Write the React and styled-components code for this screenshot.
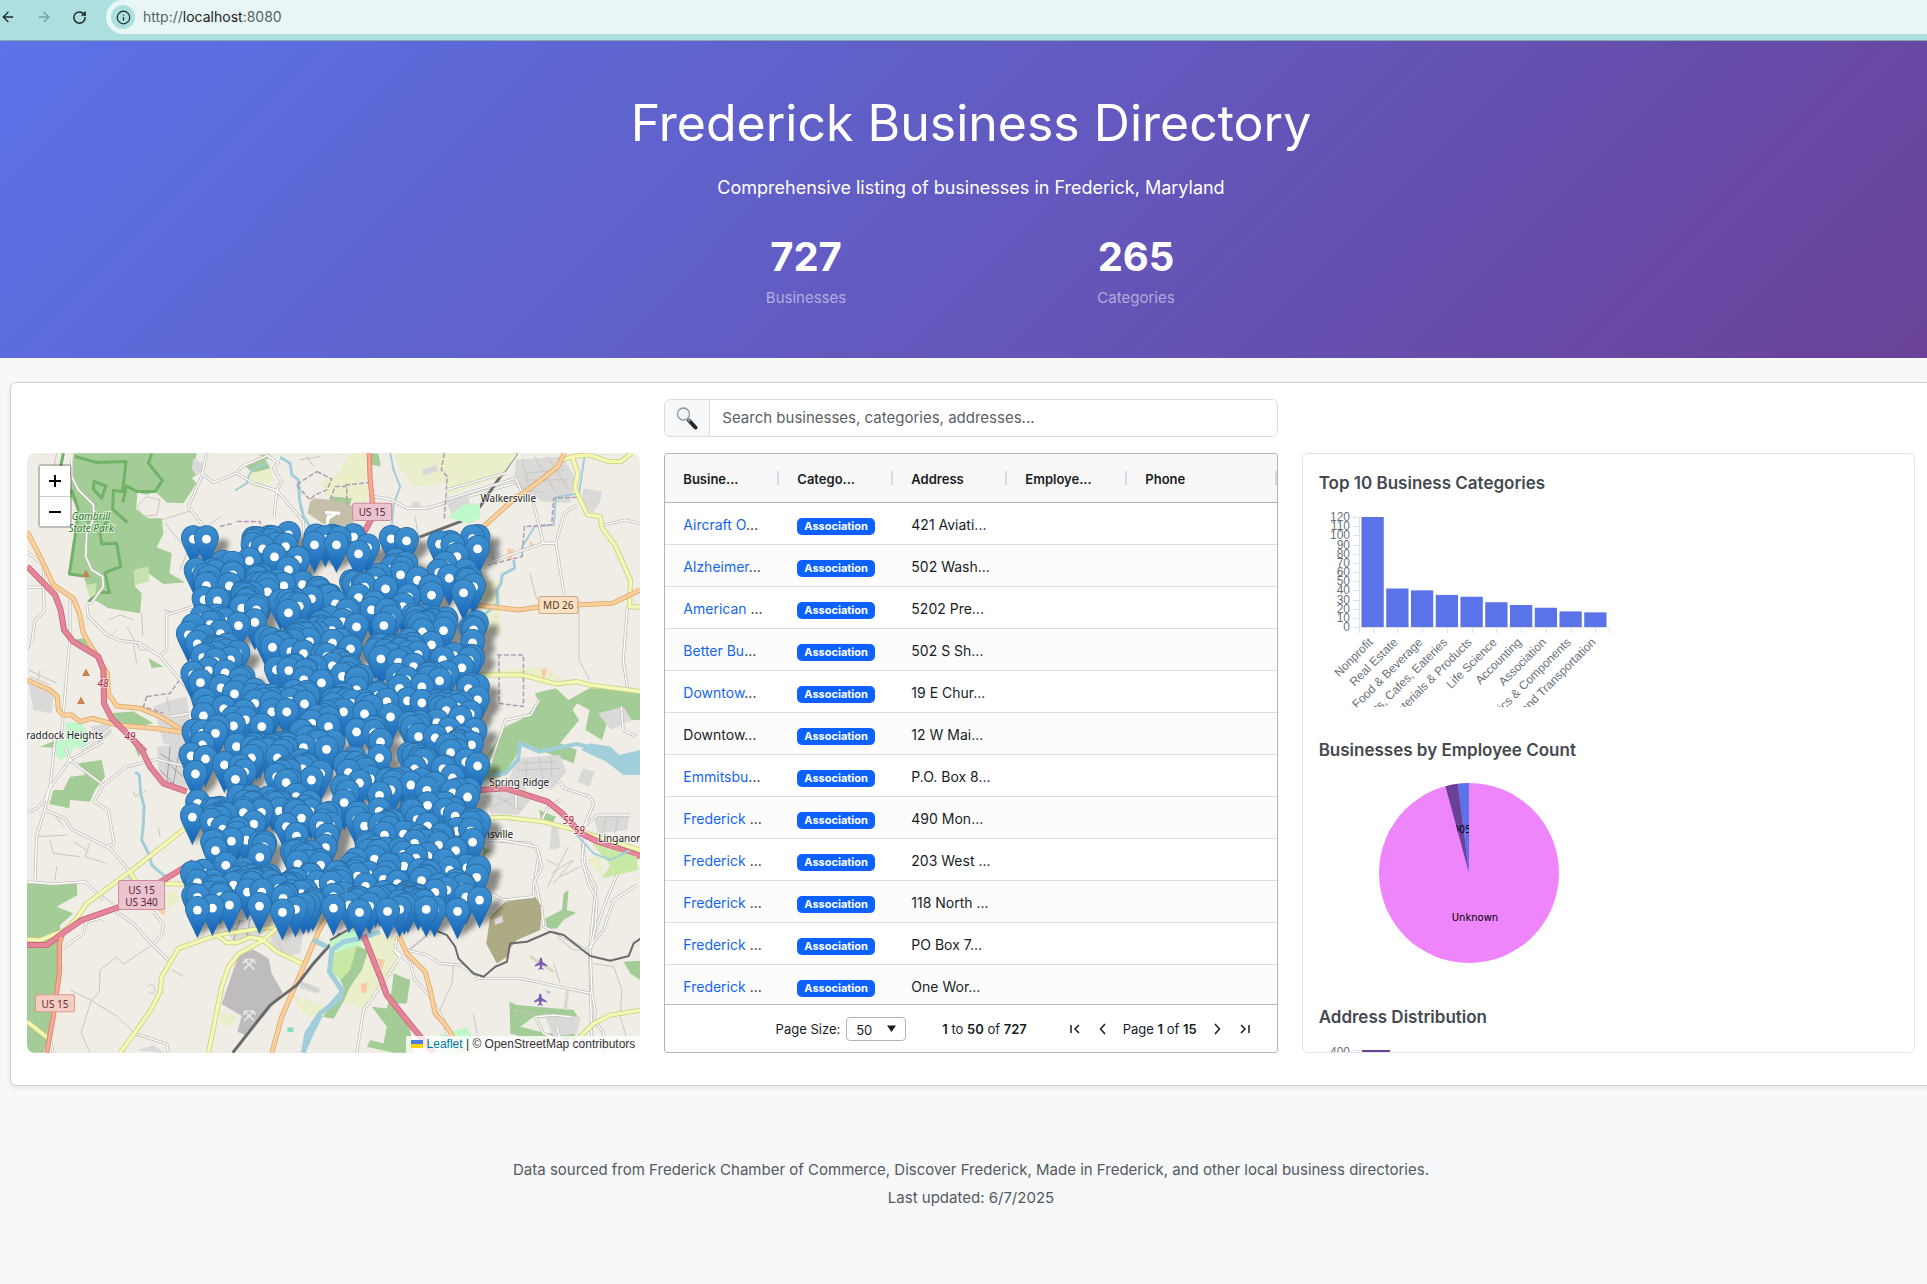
import React from "react";
import styled, { createGlobalStyle } from "styled-components";
import { ArrowLeft, ArrowRight, RotateCw, Info } from "lucide-react";

const sans = `Inter, "Liberation Sans", sans-serif`;

const GlobalStyle = createGlobalStyle`
  *, *::before, *::after { box-sizing: border-box; }
  body {
    margin: 0;
    background: #f7f8fa;
    color: #212529;
    font-family: ${sans};
    font-size: 15px;
    line-height: 24px;
    overflow: hidden;
  }
  h1, h2, p, dl, dd, dt { margin: 0; }
  button, input, select { font: inherit; color: inherit; }
`;

/* ---------- browser bar ---------- */

const BrowserBar = styled.nav`
  display: flex;
  height: 41px;
  background: #addfdf;
  border-bottom: 1px solid #86a9ac;
`;

const NavButtons = styled.div`
  display: flex;
  align-items: center;
  gap: 20px;
  width: 106px;
  height: 34px;
`;

const NavButton = styled.button`
  display: flex;
  padding: 0;
  border: 0;
  background: none;
  color: ${(p) => (p.disabled ? "#7a9ea1" : "#1f2a2b")};
`;

const AddressBar = styled.div`
  display: flex;
  align-items: center;
  flex: 1;
  gap: 8px;
  height: 34px;
  padding-left: 5px;
  border-radius: 17px 0 0 17px;
  background: #e8f6f5;
  font-size: 14px;
`;

const SiteInfo = styled.span`
  display: grid;
  place-items: center;
  width: 24px;
  height: 24px;
  border-radius: 50%;
  background: #addfdf;
  color: #1f2a2b;
`;

const Url = styled.a`
  color: #566364;
  text-decoration: none;
  b { font-weight: 400; color: #1b2223; }
`;

/* ---------- header ---------- */

const Page = styled.div`
  margin-right: -15px;
`;

const Hero = styled.header`
  display: flex;
  flex-direction: column;
  align-items: center;
  padding: 48px 16px;
  background: linear-gradient(135deg, #5b73e8 0%, #6a4198 100%);
  color: #fff;
`;

const Title = styled.h1`
  font-size: 50px;
  font-weight: 400;
  line-height: 68px;
`;

const Lead = styled.p`
  margin-top: 16px;
  font-size: 18px;
  line-height: 30px;
`;

const Stats = styled.dl`
  display: grid;
  grid-template-columns: 330px 330px;
  margin-top: 30px;
`;

const Stat = styled.div`
  display: flex;
  flex-direction: column-reverse;
  align-items: center;
  gap: 5px;
  dt { color: rgba(255, 255, 255, 0.5); }
  dd { font-size: 40px; font-weight: 700; line-height: 48px; }
`;

/* ---------- dashboard ---------- */

const Card = styled.main`
  display: grid;
  grid-template-columns: repeat(3, minmax(0, 1fr));
  gap: 16px 24px;
  margin: 24px 10px 0;
  padding: 16px 16px 32px;
  border: 1px solid #d0d2d5;
  border-radius: 6px;
  background: #fff;
  box-shadow: 0 2px 4px rgba(0, 0, 0, 0.08);
`;

const SearchBox = styled.label`
  grid-column: 2;
  display: flex;
  height: 38px;
  border: 1px solid #d8dde3;
  border-radius: 6px;
  overflow: hidden;
`;

const SearchIcon = styled.span`
  display: grid;
  place-items: center;
  width: 45px;
  border-right: 1px solid #d8dde3;
  background: #f7f8fa;
`;

const SearchInput = styled.input`
  flex: 1;
  min-width: 0;
  padding: 0 12px;
  border: 0;
  outline: 0;
  background: #fff;
  &::placeholder { color: #595f65; opacity: 1; }
`;

const MapPanel = styled.section`
  position: relative;
  grid-column: 1;
  height: 600px;
  border-radius: 8px;
  overflow: hidden;
  background: #f0ede6;
  > svg { display: block; width: 100%; height: 100%; }
`;

const ZoomControl = styled.div`
  position: absolute;
  top: 11px;
  left: 11px;
  border: 2px solid rgba(0, 0, 0, 0.2);
  border-radius: 4px;
  background-clip: padding-box;
`;

const ZoomButton = styled.button`
  display: grid;
  place-items: center;
  width: 30px;
  height: 30px;
  padding: 0;
  border: 0;
  background: #fff;
  color: #000;
  & + & { border-top: 1px solid #ccc; }
`;

const Attribution = styled.div`
  position: absolute;
  right: 0;
  bottom: 0;
  padding: 0 5px;
  background: rgba(255, 255, 255, 0.8);
  color: #333;
  font: 12px/17px "Liberation Sans", sans-serif;
  a { color: #0078a8; text-decoration: none; }
`;

const Flag = styled.span`
  display: inline-block;
  width: 12px;
  height: 8px;
  margin-right: 4px;
  background: linear-gradient(#4c7be1 50%, #ffd500 50%);
`;

const GridPanel = styled.section`
  display: flex;
  flex-direction: column;
  height: 600px;
  border: 1px solid #afb5bf;
  border-radius: 3px;
  overflow: hidden;
`;

const GridBody = styled.div`
  flex: 1;
  min-height: 0;
  overflow: hidden;
`;

const Table = styled.table`
  width: 100%;
  table-layout: fixed;
  border-collapse: separate;
  border-spacing: 0;
  color: #181d1f;
  font-size: 14px;
  white-space: nowrap;
  text-align: left;
`;

const Col = styled.col`
  width: ${(p) => p.$width};
`;

const HeadCell = styled.th`
  height: 49px;
  padding: 2px 0 0 18px;
  border-bottom: 1px solid #afb5bf;
  background: linear-gradient(#d5dbe6, #d5dbe6) right center / 2px 14px no-repeat #f7f7f7;
  font-weight: 600;
  font-size: 13px;
`;

const Row = styled.tr`
  &:nth-child(even) { background: #fcfcfc; }
`;

const Cell = styled.td`
  height: 42px;
  padding: 2px 0 0 18px;
  border-bottom: 1px solid #d8dee8;
  line-height: 20px;
`;

const BusinessLink = styled.a`
  color: #1466f0;
  text-decoration: none;
`;

const Badge = styled.span`
  display: inline-block;
  padding: 0 7px;
  border-radius: 5px;
  background: #0d62ff;
  color: #fff;
  font-size: 11px;
  font-weight: 700;
  line-height: 17px;
  vertical-align: -1px;
`;

const Pager = styled.footer`
  display: flex;
  align-items: center;
  justify-content: flex-end;
  height: 48px;
  padding-right: 24px;
  border-top: 1px solid #afb5bf;
  color: #181d1f;
  font-size: 13px;
  b { font-weight: 600; }
`;

const PageSize = styled.label`
  display: flex;
  align-items: center;
  gap: 6px;
`;

const SelectWrap = styled.span`
  position: relative;
  display: flex;
  svg { position: absolute; right: 10px; top: 8px; pointer-events: none; }
`;

const SizeSelect = styled.select`
  width: 60px;
  height: 24px;
  padding: 0 9px;
  border: 1px solid #afb5bf;
  border-radius: 4px;
  background: #fff;
  appearance: none;
`;

const RangeText = styled.span`
  margin: 0 40px 0 36px;
`;

const PageNav = styled.div`
  display: flex;
  align-items: center;
  gap: 12px;
`;

const PageButton = styled.button`
  display: flex;
  padding: 0;
  border: 0;
  background: none;
`;

const ChartsPanel = styled.aside`
  height: 600px;
  padding: 16px;
  border: 1px solid #dfe2e6;
  border-radius: 6px;
  overflow: hidden;
`;

const ChartSection = styled.section`
  margin-bottom: 30px;
  svg { display: block; overflow: hidden; }
`;

const ChartTitle = styled.h2`
  margin-bottom: 10px;
  color: #444a50;
  font-size: 17px;
  font-weight: 600;
  line-height: 27px;
`;

const PageFooter = styled.footer`
  display: flex;
  flex-direction: column;
  align-items: center;
  gap: 4px;
  padding: 72px 16px;
  color: #54585c;
`;

/* ---------- map ---------- */

const ROADS = {
  motorway: ["#c9647c", "#e48598", 6],
  trunk: ["#d98068", "#f7a992", 5],
  primary: ["#dba867", "#fcd09c", 5],
  secondary: ["#c9cf83", "#f5f8b4", 5],
  minor: ["#c4c0ba", "#ffffff", 3],
};

function Road({ kind, d }) {
  const [edge, fill, width] = ROADS[kind];
  const common = { d, fill: "none", strokeLinejoin: "round", vectorEffect: "non-scaling-stroke" };
  return (
    <>
      <path {...common} stroke={edge} strokeWidth={width} />
      <path {...common} stroke={fill} strokeWidth={width - 1.6} />
    </>
  );
}

function Line({ d, color, width = 1, dash }) {
  return (
    <path
      d={d}
      fill="none"
      stroke={color}
      strokeWidth={width}
      strokeDasharray={dash}
      strokeLinejoin="round"
      vectorEffect="non-scaling-stroke"
    />
  );
}

const FOREST = "#a4cc97";
const FARM = "#ebeecb";
const TOWN = "#dad9d8";
const WATER = "#a1cedb";
const LANE = "#c9c6c3";
const BORDER = "#b39bb5";

function NorthWest() {
  return (
    <g transform="translate(-7 -3) scale(.3333)">
      <path fill={FOREST} d="M160 10H530L522 45 548 62 515 85 530 100 490 160 440 158 405 125 380 135 352 128 348 178 385 205 425 205 430 250 410 292 455 310 448 370 495 398 430 402 385 370 345 360 345 410 365 430 360 490 300 480 265 475 215 445 190 378 150 375 165 240 180 180 150 140Z" />
      <path fill="#c8e3ae" d="M198 405L230 400 225 440 210 445ZM340 360L385 350 388 395 345 405Z" />
      <path fill={FOREST} d="M670 45L730 18 750 55 700 70ZM150 570L195 565 235 605 215 600ZM270 790L340 785 400 820 350 830 290 820ZM110 870L60 890 120 895ZM385 625L430 650 395 655Z" />
      <path fill={FARM} d="M985 10H1045L1055 80 1000 100 945 90ZM1120 10H1280L1275 100 1180 110 1140 60ZM680 70L750 60 760 90 720 120 680 100ZM900 100L950 70 1050 100 1040 160 930 150Z" />
      <path fill={FOREST} d="M1050 10L1075 12 1082 50 1055 45ZM935 140L995 145 990 165 930 160ZM715 15L750 15 740 30Z" />
      <path fill={TOWN} d="M520 25L548 40 545 65 525 75 515 55ZM25 700L60 705 100 740 95 790 40 780ZM1175 155L1200 155 1200 180 1175 178ZM1205 60L1250 45 1252 65 1210 78ZM210 830L270 820 275 850 235 880ZM400 770L450 750 500 740 520 900 430 880Z" />
      <path fill="#bff8cb" d="M135 820L180 815 205 850 200 890 140 895Z" />
      <path fill="#c3bfa8" d="M885 145L965 155 1000 170 1000 225 930 235 862 190 870 155Z" />
      <Line color="#70b266" width={3} d="M130 10L120 60 155 75M165 20L230 38 318 35 308 125 280 122 278 178 322 218M395 12L385 40 427 92 405 125 350 125 320 108 308 158M222 95L258 108 245 145 220 118ZM155 120L175 180 165 260 148 372 190 378M205 455L240 428 268 428 255 368 302 350 290 280 245 282 240 250 265 205 200 215" />
      <Line color={WATER} width={3} d="M780 22L810 40 815 75 835 90 838 150 850 200 870 230 900 240" />
      <Line color={WATER} width={2} d="M740 40L700 55 685 80 680 100 645 122M1110 10L1120 60 1140 110 1120 165 1115 230" />
      <Line color={BORDER} width={1.5} dash="5 2" d="M890 65L935 88 920 120 885 135 870 150 828 105 890 65M975 105L1050 98 1050 160M930 150L945 110 980 110 980 165M650 215L720 215 725 245 800 240M600 230L640 220M380 740L450 730 485 680 500 640M380 740L370 770 430 790" />
      <Line color={LANE} d="M425 210L520 180M435 220L500 300M480 360L500 310M860 20L880 50M840 30L900 20M265 510L300 495 340 510M320 530L360 600 400 600M340 580L350 640M430 480L470 490 500 470M40 560L25 600M25 660L110 700M30 680L90 705M60 660L55 690M440 740L450 790M550 240L600 200" />
      <Line color={LANE} d="M350 170L380 140 420 150 410 195 370 200ZM270 560L290 540M365 490L368 560M110 10L100 60 120 90" />
      <Road kind="minor" d="M560 10L545 80 505 170 555 235M545 70L580 98 650 70 665 50 700 35 740 18M650 70L700 100 770 122 850 215 852 260M740 15L775 40 760 55 785 95 770 122 762 200" />
      <Road kind="minor" d="M155 30V80L175 120 220 165 222 205 200 250 197 320 215 360 248 380 250 410 212 462M212 462L200 458M20 305L70 345 72 485 45 510 35 580M22 412H75M150 440V560L130 790 120 900M200 465L205 500 260 555 300 572 355 578 420 618 505 720M440 600L440 495 520 470M420 618L440 600" />
      <Road kind="minor" d="M1060 140L1110 148 1160 175 1220 175 1500 95M270 835L230 870 180 900M450 800L510 790" />
      <Road kind="primary" d="M22 245L60 320 100 405 160 445 178 490 190 550 225 610 262 670 265 730 290 768 360 775 420 800 520 860" />
      <Road kind="primary" d="M22 690L90 720 112 740 115 780 130 795 155 795 180 815 215 805 290 825 400 835 510 850" />
      <Road kind="motorway" d="M22 350L105 435 122 480 132 540 160 575 235 620 250 660 252 760 275 805 330 860 375 905" />
      <Road kind="trunk" d="M1047 10L1050 90 1058 165" />
      <Road kind="motorway" d="M1058 165L1055 205 1030 250" />
      <Line color="#6d6d6d" width={3} d="M1490 10L1430 95 1380 170 1340 208 1190 265" />
      <Line color="#ffffff" width={3} d="M920 230L925 195M915 188L960 190M925 205L945 192" />
    </g>
  );
}

function NorthEast() {
  return (
    <g transform="translate(-27 -93) scale(.4209 .3333)">
      <path fill={FARM} d="M1050 280H1230L1190 350 1060 410ZM1145 670L1190 660 1185 830 1150 800ZM1150 935L1290 920 1340 960 1240 950Z" />
      <path fill={TOWN} d="M1225 300L1335 290 1365 350 1355 430 1290 425 1220 370ZM1385 385L1430 395 1425 425 1408 460 1380 440ZM1060 420L1110 400 1120 460 1070 460ZM1140 520L1170 520 1175 600 1145 590Z" />
      <path fill="#bff8cb" d="M1065 470L1100 435 1140 430 1140 475 1110 492Z" />
      <path fill="#f6cba4" d="M1205 565L1220 570 1215 600 1205 595ZM1258 540L1270 560 1258 570ZM1285 930L1300 925 1290 960Z" />
      <path fill={FOREST} d="M1270 1000L1320 985 1350 1020 1400 985 1520 990V1080H1430L1400 1050 1370 1030 1340 1090 1265 1080 1285 1040Z" />
      <Line color={WATER} width={3} d="M1220 600L1222 625 1192 645 1190 670 1180 690 1182 730 1145 770" />
      <Line color={WATER} width={2} d="M1388 290L1375 400 1320 412 1315 495 1270 500 1240 560 1240 590" />
      <Line color={BORDER} width={1.5} dash="5 2" d="M1055 280L1048 330 1062 350 1055 480M1180 885H1243V1040L1185 1030V885M1370 412L1315 415 1310 495 1245 500 1240 590 1160 615" />
      <Line color={LANE} d="M1225 380L1290 400M1240 300L1260 400M1270 290L1320 400M1300 290L1350 390M1375 720V900L1400 960M1258 640L1275 720M985 470L1000 560M1250 340L1340 330M1245 360L1350 360" />
      <Road kind="minor" d="M1060 420L1225 355M1060 390L1200 340M1265 420L1290 550 1320 550 1340 705M1320 550L1340 460 1372 435M1165 605L1290 550M1490 740L1480 900 1490 985M1435 495L1485 480 1520 492M1225 355L1240 400 1200 420" />
      <Road kind="secondary" d="M1325 305L1360 290 1400 285 1445 305 1475 305 1500 280M1360 295L1372 340 1365 385 1395 465 1425 470 1430 505 1460 555 1497 660 1495 740 1520 742M1140 945L1240 945 1320 972 1370 965 1400 975 1520 995" />
      <Road kind="primary" d="M1340 280L1325 320 1280 365 1210 430 1135 515M1130 735L1230 750 1290 740 1455 730 1520 690" />
    </g>
  );
}

function East() {
  return (
    <g transform="translate(-27 247) scale(.4209 .3333)">
      <path fill={FOREST} d="M1280 0L1350 10 1375 60 1330 130 1370 150 1362 190 1240 130 1220 180 1190 230 1150 240V180L1200 80 1250 50ZM1400 30L1500 0 1500 60 1440 75 1430 120 1390 90ZM1280 330L1320 350 1310 375 1285 360Z" />
      <path fill={WATER} d="M1400 130L1450 140 1470 165 1520 150V225L1480 225 1440 185 1380 150Z" />
      <path fill={TOWN} d="M1225 175L1330 165 1345 215 1310 270 1240 240 1260 300 1230 345 1165 340 1155 290 1210 240ZM1385 205L1412 215 1400 260 1370 245ZM1310 380L1325 375 1325 440 1305 450ZM1410 350L1495 340 1490 390 1420 400ZM1420 40L1480 20 1500 60 1450 90Z" />
      <Line color={LANE} d="M1240 190L1320 185M1230 210L1330 205M1250 180V230M1280 170L1290 240M1310 170V230M1180 290L1240 330M1170 320L1220 290M1440 350L1430 400M1460 400L1470 340M1350 440L1300 560M1360 480L1310 520" />
      <Line color={WATER} width={4} d="M1165 225L1200 220 1230 180 1235 130 1280 155 1370 132 1410 145" />
      <Road kind="minor" d="M1165 190L1200 60 1260 45 1280 0M1475 20L1480 90 1510 110M1225 280V325M1325 240L1340 265 1400 290 1410 310 1380 400M1285 365L1300 325 1330 300M1390 375L1420 345 1495 345M1380 400L1390 500 1415 560 1400 750 1405 1010M1515 470L1470 510 1440 600 1400 740M1150 420L1260 430 1280 460 1270 540 1285 620" />
      <Road kind="secondary" d="M1140 355L1200 352 1290 365 1380 395 1520 450" />
      <Road kind="motorway" d="M1140 270L1200 265 1300 305 1335 340 1380 400 1420 425 1520 468" />
    </g>
  );
}

function SouthWest() {
  return (
    <g transform="translate(-7 287) scale(.3333)">
      <path fill={FOREST} d="M20 430L80 432 170 432 172 465 110 500 160 520 120 555 120 600 115 760 90 870 70 938H20Z" />
      <path fill={FOREST} d="M175 70L245 60 255 110 225 150 210 185 150 180 148 205 88 192 100 150 130 150 150 110 195 105ZM340 10L375 20 355 50ZM900 810L960 770 935 835Z" />
      <path fill="#bff8cb" d="M110 0H160L155 40 120 60 105 40Z" />
      <path fill={TOWN} d="M410 20L490 10 500 150 440 140 415 90ZM310 400L345 405 330 425ZM600 560L700 530 740 570 700 600 640 600ZM760 560L850 570 840 640 790 650 750 620ZM840 720L900 745 895 760 840 745ZM350 930L400 915 435 938Z" />
      <path fill={FARM} d="M410 470L470 450 485 480 430 510ZM600 820L655 825 630 862 600 850ZM810 760L880 790 930 820 900 835 850 820Z" />
      <path fill="#bfbcbd" d="M655 645L700 628 745 655 755 700 788 758 755 800 680 888 652 875 665 828 605 792Z" />
      <path fill="#f6cba4" d="M410 510L440 512 430 525Z" />
      <Line color={WATER} width={3} d="M345 97L358 105 362 160 372 200 370 250 365 300 388 345 395 375 430 405 450 415" />
      <Line color={WATER} width={4} d="M960 760L900 830 875 880 850 938" />
      <Line color={LANE} d="M105 225L130 260M50 290L140 285M90 300L100 340 180 350M160 305L200 330M210 310L195 350 260 370M110 380L105 420M240 460L290 500M185 540L220 520 250 545M290 650L240 690 238 755 212 785 183 878 210 938M290 650L310 672 395 615M150 750L212 780 290 828 345 880M455 690L490 708M385 740Q395 725 405 745 400 770 385 755M415 262L420 290M340 155L345 170 380 150M580 560L620 540M770 600L790 640M845 730L895 755" />
      <Line color="#a3a0a0" d="M420 40L480 80M430 60L490 110M420 90L470 140M450 20L440 130M480 20L460 130M630 560L700 590M660 540L640 600M690 535L680 595M610 575L720 560" />
      <Road kind="minor" d="M105 0L90 140 75 205 50 290 45 420M22 215L50 205 75 180 85 150 150 60 250 5M135 20L150 60 250 135 320 80 410 58M410 58L500 80M250 135L222 185 265 210 282 310 262 320M75 210L135 235 155 268 215 298 270 325 330 395M22 425L100 432 195 425 250 480M285 512L340 550 395 612 445 660M400 515L430 555 425 585 400 612M128 625L190 580 200 545 240 535M112 682H130M345 880L440 912 445 938M90 895L100 938" />
      <Road kind="secondary" d="M22 598L60 600 135 570 170 535 200 490 330 395 495 265M330 395L350 430 495 432M300 938L350 870 395 805 420 755 425 710 475 625 590 585 760 560M565 938L605 740 625 680 655 642 730 600 780 555M590 585L620 608 650 608 690 592 725 597 770 635 850 672M22 845L85 895" />
      <Road kind="primary" d="M755 938L785 830 850 680 895 575 920 530" />
      <Road kind="motorway" d="M340 0L365 30 390 80 430 130 500 155M22 615L80 615 120 585 185 540 300 500M300 500L520 365M85 610L130 580" />
      <Road kind="trunk" d="M125 590L118 610 118 700 100 830 80 938" />
      <Line color="#6b6b6b" width={3} d="M638 938L750 795 830 735 880 670 960 580" />
    </g>
  );
}

function SouthEast() {
  return (
    <g transform="translate(153 297) scale(.3333)">
      <path fill={FARM} d="M560 545L645 560 660 640 600 720 550 780 490 755 520 680 560 600ZM370 740L440 775 430 800 380 780ZM1220 330L1260 310 1270 380Z" />
      <path fill="#bff8cb" d="M445 570L530 530 560 560 530 590 455 610ZM780 855L860 830 880 870 840 908H800Z" />
      <path fill="#c8e8a6" d="M455 610L540 585 560 610 510 660 480 690 455 665ZM1235 280L1370 320 1372 360 1265 385 1290 345Z" />
      <path fill={FOREST} d="M530 590L565 600 545 660 510 710 490 755 460 806 428 800 480 740 490 710 480 690 510 660ZM640 670L690 690 680 760 650 760 690 840 700 908H640L560 890 570 870 610 880 620 830 575 770 620 775 635 720ZM1150 430L1165 420 1160 480 1187 488 1150 510 1130 535 1100 535 1095 505 1145 480ZM1330 635L1380 632V690L1350 670ZM988 755L1010 765 1180 780 1200 810 1060 800 1020 830 1100 850 1180 845 1190 870 1060 870 990 850ZM910 290L930 300 905 325Z" />
      <path fill="#aeab84" d="M975 455L1065 440 1085 470 1080 540 1010 570 985 600 980 620 950 640 918 580 930 500Z" />
      <path fill="#e3d3e1" d="M942 508L965 497 970 515 945 525Z" />
      <path fill={TOWN} d="M1110 250L1135 240 1140 290 1120 300ZM1090 790L1200 800 1190 850 1120 860Z" />
      <path fill="#f6cba4" d="M540 705L560 695 560 725 545 730ZM590 625L615 630 605 660Z" />
      <path fill="#7fe0bd" d="M322 832H340V846H322Z" />
      <path fill={WATER} d="M1095 720L1112 725 1105 733ZM1200 860L1220 870 1205 885Z" />
      <Line color="#ddd6c2" width={3} d="M1048 618L1120 665M1162 720L1155 780" />
      <Line color={LANE} width={2} d="M680 605L735 560" />
      <Line color={LANE} d="M820 645L815 700 775 790M1240 640L1300 650 1325 720 1320 800 1350 900M1200 350L1140 380M1180 330L1120 400M1100 330L1130 345M880 790L890 850M1130 560L1180 600 1220 600M1000 780L1060 790M1120 640L1140 700" />
      <Line color={WATER} width={5} d="M600 545L540 565 490 575 455 600 448 665 485 720 480 745 420 790 380 850 370 908M400 570L440 590" />
      <Line color={WATER} width={2} d="M1185 250L1240 310 1290 330 1350 300" />
      <Road kind="minor" d="M660 620L600 710 550 780 530 908M650 560L645 600 690 640 705 690 750 740 790 810 800 850 860 908M680 600L740 615 780 640 840 645 905 685 1020 685 1130 708 1232 730M905 680L880 690M1210 280L1205 330 1225 400 1250 450 1245 530 1230 600 1235 730 1245 780 1240 830M1370 405L1300 450 1270 540 1220 600M930 430L970 450 1060 440 1060 400 1085 350 1070 290 960 270M1085 470L1090 530 1150 560 1215 600M1065 800L1120 795 1170 800M1065 800L1090 850 1140 870 1130 830M1250 820L1270 850V908M640 600L660 620" />
      <Road kind="secondary" d="M1190 870L1240 820 1290 795 1380 780" />
      <Road kind="primary" d="M655 555L680 610 735 665 750 720 765 790 800 830 830 880 865 908" />
      <Road kind="motorway" d="M470 370L500 420 510 450M550 555L600 680 620 735 680 810 760 908" />
      <Line color="#6b6b6b" width={2} d="M450 570L520 530M700 505L740 530 800 555 825 590 835 625 880 670 910 680 945 650 980 635 990 580 1040 575 1110 545 1150 555 1230 618 1290 632 1345 618 1360 580 1382 565" />
      <g stroke="#e9e8e8" strokeWidth="5" fill="none">
        <path d="M192 628L222 658M222 628L192 658M190 640Q195 628 206 628M208 628Q222 628 226 640M192 782L222 812M222 782L192 812M190 794Q195 782 206 782M208 782Q222 782 226 794" />
      </g>
      <g fill="#7a5cb8">
        <path id="plane" d="M1082 622Q1086 622 1086 630L1087 636 1101 645V649L1086 645 1085 653 1090 657V659L1082 657 1074 659V657L1079 653 1078 645 1064 649V645L1077 636 1078 630Q1078 622 1082 622Z" />
        <use href="#plane" x="-2" y="108" />
      </g>
    </g>
  );
}

function Shield({ x, y, w, h, fill, edge, ink, lines }) {
  return (
    <g>
      <rect x={x} y={y} width={w} height={h} rx="2" fill={fill} stroke={edge} />
      {lines.map((t, i) => (
        <text key={t} x={x + w / 2} y={y + 13 + i * 12} textAnchor="middle" fontSize="10" fill={ink}>{t}</text>
      ))}
    </g>
  );
}

/* Marker heads as x, y pairs, upper and lower half of the city. */
const UPPER = [520,268,559,268,796,290,728,297,763,321,688,333,883,285,949,285,1015,312,1042,293,1113,267,1159,273,1258,283,1298,290,1357,266,1372,297,1310,320,833,330,805,360,638,375,559,407,628,408,742,426,791,408,847,404,552,450,592,453,874,447,1015,443,1096,417,1141,375,1192,391,1165,442,1234,436,1330,429,1287,385,1360,411,946,462,1054,480,1148,470,709,480,805,489,665,475,570,524,655,527,601,551,704,517,967,516,1009,531,935,542,868,575,1091,527,1207,546,1270,542,1357,579,1234,585,1360,540,532,582,937,579,991,597,757,592,812,605,850,611,548,623,631,630,586,635,1082,627,1193,614,1267,630,1325,654,937,648,1135,637,565,662,615,669,769,660,806,662,541,698,851,690,904,699,967,679,1180,650,1160,690,1205,711,1258,693,603,714,643,732,1009,720,1138,715,853,762,704,760,611,777,550,798,755,786,800,786,970,786,1033,792,1111,801,1162,753,1205,759,640,828,725,830,676,810,875,820,925,830,1009,846,1250,818,1320,808,1350,792,1278,782,1195,860,1245,864,1364,845,1286,842,547,850,586,850,547,885,649,890,850,893,919,898,1081,876,1354,885,995,760,1100,755,805,255,1000,262,1372,750,505,555];
const LOWER = [33,18,76,27,133,45,214,24,292,24,598,24,811,8,703,57,892,48,857,36,368,57,46,72,166,88,318,98,394,90,538,99,505,68,571,87,692,105,817,84,632,120,817,129,862,141,740,121,37,201,94,216,190,188,298,183,364,204,597,184,598,136,348,140,492,158,221,222,421,227,553,228,742,166,794,185,825,198,742,228,711,209,128,237,154,273,199,270,349,258,613,255,436,293,831,243,871,243,877,276,442,260,106,302,239,321,421,345,703,280,743,318,707,324,826,302,808,360,775,285,137,346,583,327,353,342,671,348,532,378,52,398,160,405,202,426,245,426,391,380,453,403,411,402,556,409,610,388,652,401,724,392,889,382,364,431,764,427,586,449,857,441,898,450,309,445,52,480,97,474,148,465,238,468,307,487,346,478,370,470,385,466,398,460,460,474,538,487,568,468,622,484,658,478,672,470,683,466,763,478,832,484,52,442,738,478,120,440,460,440,800,420];

/* Most of the remaining markers crowd in just behind one of the front ones. */
function buildPins() {
  const front = [];
  for (let i = 0; i < UPPER.length; i += 2) front.push([UPPER[i] / 3 - 7, UPPER[i + 1] / 3 - 3]);
  for (let i = 0; i < LOWER.length; i += 2) front.push([LOWER[i] / 3 + 153, LOWER[i + 1] / 3 + 297]);
  let seed = 727;
  const random = () => {
    seed = (seed * 1664525 + 1013904223) % 4294967296;
    return seed / 4294967296;
  };
  const pins = [...front];
  for (let tries = 0; pins.length < 727 && tries < 20000; tries++) {
    const [ax, ay] = front[Math.floor(random() * front.length)];
    const x = ax + (random() - 0.5) * 22;
    const y = ay - 5 - random() * 10;
    const hides = front.some(([fx, fy]) => y > fy && Math.hypot(x - fx, y - fy) < 14);
    const outside = x < 165 || x > 452 || y < 84 || (x > 380 && x < 416 && y < 116);
    if (!hides && !outside) pins.push([x, y]);
  }
  return pins.sort((a, b) => a[1] - b[1]);
}

const PINS = buildPins();

function CityMap() {
  return (
    <svg viewBox="0 0 613 600" preserveAspectRatio="xMidYMid slice" role="img" aria-label="Map of Frederick">
      <defs>
        <linearGradient id="pinFill" x1="0" y1="0" x2="0" y2="1">
          <stop offset="0" stopColor="#3f90d0" />
          <stop offset="0.4" stopColor="#3384c8" />
          <stop offset="1" stopColor="#1160bd" />
        </linearGradient>
        <filter id="soft" x="-5%" y="-5%" width="110%" height="110%">
          <feGaussianBlur stdDeviation="2.5" />
        </filter>
        <g id="pin">
          <path d="M0-13.5C-6.9-13.5-12-8-12-1.2-12 1.6-10.6 4.6-9.6 6.8L0 27 9.6 6.8C10.6 4.6 12 1.6 12-1.2 12-8 6.9-13.5 0-13.5Z" fill="url(#pinFill)" stroke="#2a70a9" strokeWidth="1" />
          <circle r="4.4" fill="#fff" />
        </g>
        <path id="shade" d="M0 27L5 8Q11-2 21 1 25 8 14 17Z" />
      </defs>
      <NorthWest />
      <NorthEast />
      <East />
      <SouthWest />
      <SouthEast />
      <g fill="#c9824c">
        <path d="M59 116.500l4 7.500h-8zM59 215.500l4 7.500h-8zM54 243.500l4 7.500h-8z" />
      </g>
      <g fontFamily='"Noto Sans", sans-serif' fontSize="10" fill="#222" stroke="#fff" strokeOpacity="0.6" strokeWidth="2" paintOrder="stroke">
        <text x="481" y="49" textAnchor="middle">Walkersville</text>
        <text x="492" y="333" textAnchor="middle">Spring Ridge</text>
        <text x="486" y="385" textAnchor="end">onsville</text>
        <text x="571" y="389">Linganore</text>
        <text x="76" y="286" textAnchor="end">Braddock Heights</text>
        <g fill="#2c7f2a" fontStyle="italic" textAnchor="middle">
          <text x="64" y="67">Gambrill</text>
          <text x="64" y="79">State Park</text>
        </g>
        <g fill="#a02740" fontStyle="italic" textAnchor="middle">
          <text x="76" y="234">48</text>
          <text x="103" y="287">49</text>
          <text x="541" y="371">59</text>
          <text x="552" y="381">59</text>
          <text x="319" y="437">7</text>
        </g>
      </g>
      <g fontFamily='"Noto Sans", sans-serif'>
        <Shield x={325.5} y={50.5} w={39} h={17} fill="#eac4ce" edge="#cf8b9d" ink="#5f2340" lines={["US 15"]} />
        <Shield x={511.5} y={143.5} w={39} h={17} fill="#f8e0c5" edge="#cda97e" ink="#5c3a12" lines={["MD 26"]} />
        <Shield x={91.5} y={427.5} w={46} h={29} fill="#eac4ce" edge="#cf8b9d" ink="#5f2340" lines={["US 15", "US 340"]} />
        <Shield x={8.5} y={541.5} w={39} h={17} fill="#f5cdc3" edge="#d99a8a" ink="#66302a" lines={["US 15"]} />
      </g>
      <g filter="url(#soft)" opacity="0.42">
        {PINS.map(([x, y], i) => <use key={i} href="#shade" x={x} y={y} />)}
      </g>
      {PINS.map(([x, y], i) => <use key={i} href="#pin" x={x} y={y} />)}
    </svg>
  );
}

/* ---------- charts ---------- */

const CATEGORIES = [
  ["Nonprofit", 120],
  ["Real Estate", 42],
  ["Food & Beverage", 40],
  ["Restaurants, Cafes, Eateries", 35],
  ["Materials & Products", 33],
  ["Life Science", 27],
  ["Accounting", 24],
  ["Association", 21],
  ["Electronics & Components", 17],
  ["Logistics and Transportation", 16],
];

const axisText = { fontFamily: '"Liberation Sans", sans-serif', fontSize: 12, fill: "#67717b" };

function CategoryChart() {
  const step = 250 / 10.1;
  const scale = 110 / 120;
  return (
    <svg width="300" height="200" role="img" aria-label="Top 10 Business Categories">
      <g stroke="#dde1e6" strokeWidth="1" fill="none">
        <path d="M34 10.5H40.5V120.500H34M40.5 126V120.500H290.500V126" />
        {Array.from({ length: 13 }, (_, i) => <path key={i} d={`M34 ${Math.round(120 - i * 10 * scale) + 0.5}h6`} />)}
        {CATEGORIES.map((c, i) => <path key={c[0]} d={`M${Math.round(40 + step * (i + 0.55))}.5 120v6`} />)}
      </g>
      <g {...axisText} textAnchor="end">
        {Array.from({ length: 13 }, (_, i) => (
          <text key={i} x="31" y={124 - i * 10 * scale}>{i * 10}</text>
        ))}
        {CATEGORIES.map(([name], i) => (
          <text key={name} transform={`translate(${40 + step * (i + 0.55) + 1} 136) rotate(-45)`}>{name}</text>
        ))}
      </g>
      <g fill="#5b73e8">
        {CATEGORIES.map(([name, value], i) => (
          <rect key={name} x={40 + step * (i + 0.1)} y={120 - value * scale} width={step * 0.9} height={value * scale} />
        ))}
      </g>
    </svg>
  );
}

function EmployeeChart() {
  return (
    <svg width="300" height="200" role="img" aria-label="Businesses by Employee Count">
      <defs>
        <clipPath id="slices"><path d="M150 99L126.400 12.200 150 9Z" /></clipPath>
      </defs>
      <circle cx="150" cy="99" r="90" fill="#ee85fb" />
      <path d="M150 99L126.400 12.200A90 90 0 0 1 139 9.700Z" fill="#6a4198" />
      <path d="M150 99L139 9.700A90 90 0 0 1 150 9Z" fill="#5b73e8" />
      <g fontFamily='"DejaVu Sans", sans-serif' fontSize="10" textAnchor="middle">
        <text x="156" y="147">Unknown</text>
        <text x="143" y="59" clipPath="url(#slices)">005</text>
      </g>
    </svg>
  );
}

function AddressChart() {
  return (
    <svg width="300" height="200" role="img" aria-label="Address Distribution">
      <path d="M34 9.5H40.5V120" stroke="#dde1e6" fill="none" />
      <text {...axisText} x="31" y="15" textAnchor="end">400</text>
      <rect x="43" y="9" width="28" height="111" fill="#6a4198" />
    </svg>
  );
}

/* ---------- data table ---------- */

const COLUMNS = [
  ["Busine...", "114px"],
  ["Catego...", "114px"],
  ["Address", "114px"],
  ["Employe...", "120px"],
  ["Phone", "auto"],
];

const BUSINESSES = [
  ["Aircraft O", "421 Aviati..."],
  ["Alzheimer", "502 Wash..."],
  ["American ", "5202 Pre..."],
  ["Better Bu", "502 S Sh..."],
  ["Downtow", "19 E Chur..."],
  ["Downtow", "12 W Mai...", true],
  ["Emmitsbu", "P.O. Box 8..."],
  ["Frederick ", "490 Mon..."],
  ["Frederick ", "203 West ..."],
  ["Frederick ", "118 North ..."],
  ["Frederick ", "PO Box 7..."],
  ["Frederick ", "One Wor..."],
];

function Chevron({ d }) {
  return (
    <svg width="16" height="16" viewBox="0 0 16 16" fill="none" stroke="#181d1f" strokeWidth="1.5">
      <path d={d} />
    </svg>
  );
}

function BusinessGrid() {
  return (
    <GridPanel>
      <GridBody>
        <Table>
          <colgroup>
            {COLUMNS.map(([name, width]) => <Col key={name} $width={width} />)}
          </colgroup>
          <thead>
            <tr>{COLUMNS.map(([name]) => <HeadCell key={name} scope="col">{name}</HeadCell>)}</tr>
          </thead>
          <tbody>
            {BUSINESSES.map(([name, address, plain], i) => (
              <Row key={i}>
                <Cell>{plain ? name : <BusinessLink href="#">{name}</BusinessLink>}...</Cell>
                <Cell><Badge>Association</Badge></Cell>
                <Cell>{address}</Cell>
                <Cell />
                <Cell />
              </Row>
            ))}
          </tbody>
        </Table>
      </GridBody>
      <Pager>
        <PageSize>
          Page Size:
          <SelectWrap>
            <SizeSelect defaultValue="50"><option>50</option></SizeSelect>
            <svg width="9" height="8" viewBox="0 0 9 8"><path d="M0 0.500h9L4.500 7z" fill="#181d1f" /></svg>
          </SelectWrap>
        </PageSize>
        <RangeText><b>1</b> to <b>50</b> of <b>727</b></RangeText>
        <PageNav>
          <PageButton aria-label="First page"><Chevron d="M4 4v8M12 4L8 8l4 4" /></PageButton>
          <PageButton aria-label="Previous page"><Chevron d="M10 3L5.500 8l4.500 5" /></PageButton>
          <span>Page <b>1</b> of <b>15</b></span>
          <PageButton aria-label="Next page"><Chevron d="M6 3l4.500 5L6 13" /></PageButton>
          <PageButton aria-label="Last page"><Chevron d="M12 4v8M4 4l4 4-4 4" /></PageButton>
        </PageNav>
      </Pager>
    </GridPanel>
  );
}

function Magnifier() {
  return (
    <svg width="22" height="24" viewBox="0 0 22 24">
      <path d="M13 14.500L19.500 21.500" stroke="#23282c" strokeWidth="4" strokeLinecap="round" />
      <path d="M11.500 12.500L14 15.500" stroke="#8b9299" strokeWidth="2" />
      <circle cx="7.500" cy="8" r="6" fill="#eef4f8" stroke="#8d969e" strokeWidth="1.300" />
      <path d="M4 7Q5 4 8 4" stroke="#fff" strokeWidth="1.500" fill="none" />
    </svg>
  );
}

export default function App() {
  return (
    <>
      <GlobalStyle />
      <BrowserBar>
        <NavButtons>
          <NavButton aria-label="Back"><ArrowLeft size={16} /></NavButton>
          <NavButton aria-label="Forward" disabled><ArrowRight size={16} /></NavButton>
          <NavButton aria-label="Reload"><RotateCw size={15} strokeWidth={2.4} /></NavButton>
        </NavButtons>
        <AddressBar>
          <SiteInfo><Info size={15} /></SiteInfo>
          <Url href="http://localhost:8080">http://<b>localhost</b>:8080</Url>
        </AddressBar>
      </BrowserBar>
      <Page>
        <Hero>
          <Title>Frederick Business Directory</Title>
          <Lead>Comprehensive listing of businesses in Frederick, Maryland</Lead>
          <Stats>
            <Stat><dt>Businesses</dt><dd>727</dd></Stat>
            <Stat><dt>Categories</dt><dd>265</dd></Stat>
          </Stats>
        </Hero>
        <Card>
          <SearchBox>
            <SearchIcon><Magnifier /></SearchIcon>
            <SearchInput type="text" aria-label="Search businesses" placeholder="Search businesses, categories, addresses..." />
          </SearchBox>
          <MapPanel>
            <CityMap />
            <ZoomControl>
              <ZoomButton aria-label="Zoom in">
                <svg width="14" height="14" viewBox="0 0 14 14"><path d="M1 7h12M7 1v12" stroke="#000" strokeWidth="2" /></svg>
              </ZoomButton>
              <ZoomButton aria-label="Zoom out">
                <svg width="14" height="14" viewBox="0 0 14 14"><path d="M1 7h12" stroke="#000" strokeWidth="2" /></svg>
              </ZoomButton>
            </ZoomControl>
            <Attribution>
              <Flag /><a href="https://leafletjs.com">Leaflet</a> | © OpenStreetMap contributors
            </Attribution>
          </MapPanel>
          <BusinessGrid />
          <ChartsPanel>
            <ChartSection>
              <ChartTitle>Top 10 Business Categories</ChartTitle>
              <CategoryChart />
            </ChartSection>
            <ChartSection>
              <ChartTitle>Businesses by Employee Count</ChartTitle>
              <EmployeeChart />
            </ChartSection>
            <ChartSection>
              <ChartTitle>Address Distribution</ChartTitle>
              <AddressChart />
            </ChartSection>
          </ChartsPanel>
        </Card>
        <PageFooter>
          <p>Data sourced from Frederick Chamber of Commerce, Discover Frederick, Made in Frederick, and other local business directories.</p>
          <p>Last updated: 6/7/2025</p>
        </PageFooter>
      </Page>
    </>
  );
}
